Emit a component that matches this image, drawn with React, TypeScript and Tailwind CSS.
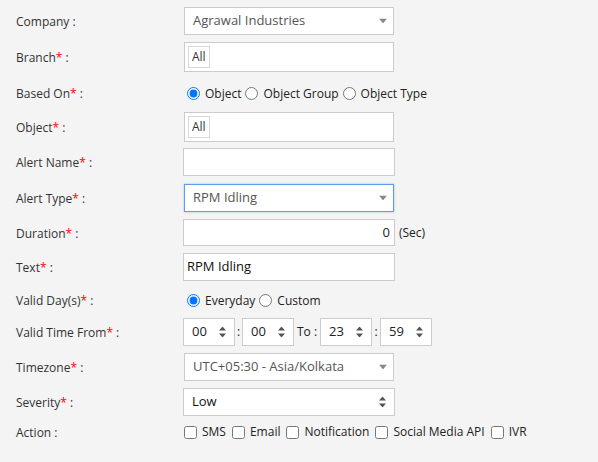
import React from "react";

const Req = () => <span className="text-[#ff0000]">*</span>;

const Label = ({ text, req }: { text: string; req?: boolean }) => (
  <div className="w-[184px] shrink-0 translate-y-px pl-4 text-[#333]">
    {text}
    {req && <Req />} :
  </div>
);

const Caret = () => (
  <svg width="8" height="5" viewBox="0 0 8 5" className="absolute right-[6px] top-1/2 -translate-y-1/2">
    <path d="M0 0h8L4 5z" fill="#888" />
  </svg>
);

const Updown = () => (
  <svg width="7" height="11" viewBox="0 0 7 11" className="absolute right-[8px] top-1/2 -translate-y-1/2">
    <path d="M3.5 0L7 4H0z M0 7h7L3.5 11z" fill="#555" />
  </svg>
);

const Select2 = ({ value, focus }: { value: string; focus?: boolean }) => (
  <div
    className={
      "relative flex h-[28px] w-[210px] items-center border bg-white pl-[8px] text-[13px] text-[#555] " +
      (focus ? "border-[#5b9ef0] shadow-[0_0_2px_rgba(91,158,240,0.6)]" : "border-[#cbcbcb]")
    }
  >
    {value}
    <Caret />
  </div>
);

const TagBox = () => (
  <div className="flex h-[30px] w-[210px] items-center border border-[#cbcbcb] bg-white pl-[3px]">
    <span className="flex h-[22px] items-center border border-[#d8d8d8] px-[3px] text-[12px] text-[#333]">All</span>
  </div>
);

const TimeBox = ({ value }: { value: string }) => (
  <div className="relative flex h-[28px] w-[52px] items-center border border-[#cbcbcb] bg-white pl-[8px] text-[13px] text-[#222]">
    {value}
    <Updown />
  </div>
);

const Radio = ({ label, checked }: { label: string; checked?: boolean }) => (
  <label className="flex items-center">
    <input type="radio" readOnly checked={!!checked} className="m-0 ml-[3px] mr-[5px] h-[13px] w-[13px] accent-[#0075ff]" />
    <span>{label}</span>
  </label>
);

const Check = ({ label }: { label: string }) => (
  <label className="mr-[6px] flex items-center">
    <input type="checkbox" readOnly checked={false} className="m-0 mr-[5px] h-[13px] w-[13px]" />
    <span>{label}</span>
  </label>
);

export default function App() {
  return (
    <div
      className="min-h-[462px] w-full bg-[#f4f4f4] pt-[3px] text-[12px] text-[#222]"
      style={{ fontFamily: "'Open Sans', 'Liberation Sans', sans-serif" }}
    >
      <div className="flex h-[36px] items-center">
        <Label text="Company" />
        <Select2 value="Agrawal Industries" />
      </div>
      <div className="flex h-[36px] items-center">
        <Label text="Branch" req />
        <TagBox />
      </div>
      <div className="flex h-[35px] items-center">
        <Label text="Based On" req />
        <div className="flex translate-y-px items-center gap-[1px] text-[12px]">
          <Radio label="Object" checked />
          <Radio label="Object Group" />
          <Radio label="Object Type" />
        </div>
      </div>
      <div className="flex h-[34px] items-center">
        <Label text="Object" req />
        <TagBox />
      </div>
      <div className="flex h-[36px] items-center">
        <Label text="Alert Name" req />
        <div className="-ml-px h-[28px] w-[212px] border border-[#cbcbcb] bg-white" />
      </div>
      <div className="flex h-[35px] items-center">
        <Label text="Alert Type" req />
        <Select2 value="RPM Idling" focus />
      </div>
      <div className="flex h-[35px] items-center">
        <Label text="Duration" req />
        <div className="-ml-px flex h-[27px] w-[212px] items-center justify-end border border-[#cbcbcb] bg-white pr-[4px] text-[13px] text-[#222]">
          0
        </div>
        <span className="ml-[4px] text-[#222]">(Sec)</span>
      </div>
      <div className="flex h-[33px] items-center">
        <Label text="Text" req />
        <div className="-ml-px flex h-[28px] w-[212px] items-center border border-[#cbcbcb] bg-white pl-[3px] text-[13px] text-[#111]">
          RPM Idling
        </div>
      </div>
      <div className="flex h-[33px] items-center">
        <Label text="Valid Day(s)" req />
        <div className="flex translate-y-px items-center gap-[1px]">
          <Radio label="Everyday" checked />
          <Radio label="Custom" />
        </div>
      </div>
      <div className="flex h-[31px] items-center">
        <Label text="Valid Time From" req />
        <div className="-ml-px flex items-center text-[#222]">
          <TimeBox value="00" />
          <span className="w-[7px] text-center">:</span>
          <TimeBox value="00" />
          <span className="mx-[3px]">To :</span>
          <TimeBox value="23" />
          <span className="w-[8px] text-center">:</span>
          <TimeBox value="59" />
        </div>
      </div>
      <div className="flex h-[39px] items-center">
        <Label text="Timezone" req />
        <Select2 value="UTC+05:30 - Asia/Kolkata" />
      </div>
      <div className="flex h-[31px] items-center">
        <Label text="Severity" req />
        <div className="relative -ml-px flex h-[28px] w-[212px] items-center border border-[#cbcbcb] bg-white pl-[8px] text-[13px] text-[#111]">
          Low
          <Updown />
        </div>
      </div>
      <div className="flex h-[30px] items-center">
        <Label text="Action" />
        <div className="flex items-center">
          <Check label="SMS" />
          <Check label="Email" />
          <Check label="Notification" />
          <Check label="Social Media API" />
          <Check label="IVR" />
        </div>
      </div>
    </div>
  );
}
